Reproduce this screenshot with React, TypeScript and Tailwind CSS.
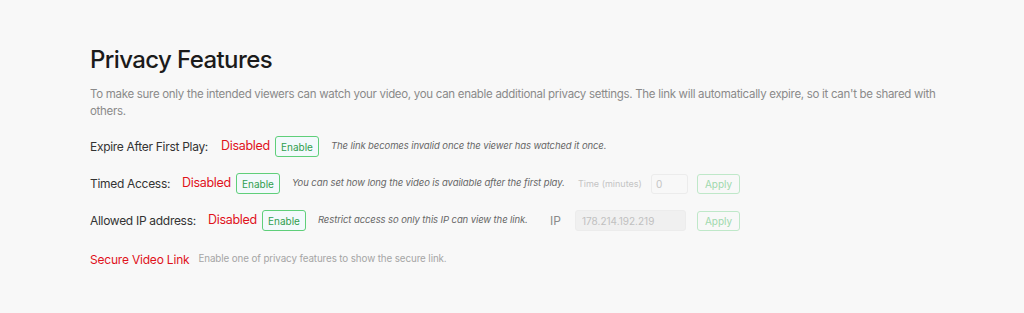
const font = { fontFamily: "Inter, 'Noto Sans', sans-serif" };

const EnableButton = () => (
  <button
    type="button"
    className="h-[21px] w-[44px] rounded-[3px] border border-[#5fcf7a] bg-[#f3f9fc] text-[10px] text-[#2f9e4f] leading-none"
  >
    Enable
  </button>
);

const ApplyButton = () => (
  <button
    type="button"
    className="h-[20px] w-[43px] rounded-[3px] border border-[#bfe8c9] bg-transparent text-[10px] text-[#9fd8ad] leading-none"
  >
    Apply
  </button>
);

const Status = () => (
  <span className="w-[54px] text-[12.5px] text-[#e0121b] tracking-[-0.3px]">Disabled</span>
);

export default function App() {
  return (
    <div
      className="w-[1024px] h-[313px] bg-[#f8f8f8] pl-[90px] pr-[60px] pt-[44px]"
      style={font}
    >
      <h2 className="text-[24px] leading-[32px] font-medium text-[#1b1b1b] tracking-[-0.6px]">
        Privacy Features
      </h2>
      <p className="mt-[10px] max-w-[850px] text-[11.5px] leading-[17px] text-[#8a8a8a] tracking-[-0.3px]">
        To make sure only the intended viewers can watch your video, you can enable additional
        privacy settings. The link will automatically expire, so it can&apos;t be shared with
        others.
      </p>

      <div className="mt-[16px] flex flex-col gap-[16px] whitespace-nowrap">
        {/* Expire after first play */}
        <div className="flex items-center h-[21px]">
          <span className="text-[12px] text-[#333] tracking-[-0.3px] w-[131px]">
            Expire After First Play:
          </span>
          <Status />
          <EnableButton />
          <span className="ml-[12px] text-[9.5px] italic text-[#666] tracking-[-0.1px]">
            The link becomes invalid once the viewer has watched it once.
          </span>
        </div>

        {/* Timed access */}
        <div className="flex items-center h-[21px]">
          <span className="text-[12px] text-[#333] tracking-[-0.3px] w-[92px]">
            Timed Access:
          </span>
          <Status />
          <EnableButton />
          <span className="ml-[12px] text-[9.5px] italic text-[#666] tracking-[-0.1px] w-[286px]">
            You can set how long the video is available after the first play.
          </span>
          <span className="text-[9px] text-[#c4c4c4] w-[73px]">Time (minutes)</span>
          <input
            disabled
            defaultValue="0"
            className="h-[20px] w-[37px] rounded-[3px] border border-[#ececec] bg-transparent px-[4px] text-[10px] text-[#c4c4c4]"
          />
          <div className="ml-[9px] flex">
            <ApplyButton />
          </div>
        </div>

        {/* Allowed IP */}
        <div className="flex items-center h-[21px]">
          <span className="text-[12px] text-[#333] tracking-[-0.3px] w-[118px]">
            Allowed IP address:
          </span>
          <Status />
          <EnableButton />
          <span className="ml-[12px] text-[9.5px] italic text-[#666] tracking-[-0.1px] w-[232px]">
            Restrict access so only this IP can view the link.
          </span>
          <span className="text-[12px] text-[#8a8a8a] w-[25px]">IP</span>
          <input
            disabled
            defaultValue="178.214.192.219"
            className="h-[21px] w-[111px] rounded-[3px] border border-[#ececec] bg-[#f0f0f0] px-[6px] text-[10px] text-[#c0c0c0]"
          />
          <div className="ml-[11px] flex">
            <ApplyButton />
          </div>
        </div>

        {/* Secure link */}
        <div className="flex items-center h-[21px] mt-[2px]">
          <span className="text-[12px] text-[#e0121b] tracking-[-0.2px]">Secure Video Link</span>
          <span className="ml-[9px] text-[9.8px] text-[#a5a5a5] tracking-[-0.1px]">
            Enable one of privacy features to show the secure link.
          </span>
        </div>
      </div>
    </div>
  );
}
